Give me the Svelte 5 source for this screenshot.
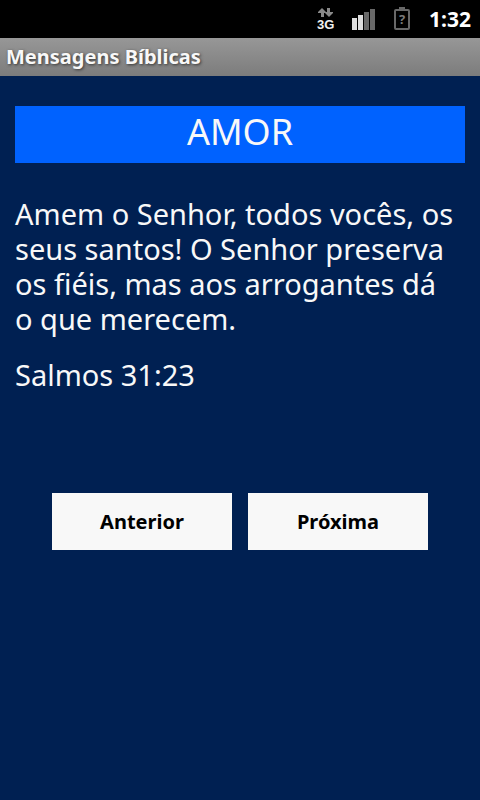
<script lang="ts">
	const verses = [
		{
			theme: 'AMOR',
			text: 'Amem o Senhor, todos vocês, os seus santos! O Senhor preserva os fiéis, mas aos arrogantes dá o que merecem.',
			reference: 'Salmos 31:23'
		}
	];

	let index = $state(0);
	const verse = $derived(verses[index]);

	const move = (step: number) => {
		index = (index + step + verses.length) % verses.length;
	};
</script>

<div class="screen">
	<div class="status-bar">
		<svg class="network" width="16" height="24" viewBox="0 0 16 24" role="img" aria-label="3G">
			<path d="M4 1 8 5V6H6V10H3V6H0V5Z" fill="#8a8a8a" />
			<path d="M9 1H12V5H15V6L11 10 7 6V5H9Z" fill="#8a8a8a" />
			<text x="-1" y="22">3G</text>
		</svg>
		<svg width="24" height="24" viewBox="0 0 24 24" aria-hidden="true">
			<path d="M0 11H5V23H0Z M6 8H11V23H6Z" fill="#dedede" />
			<path d="M12 5H17V23H12Z M18 2H23V23H18Z" fill="#686868" />
		</svg>
		<svg class="battery" width="17" height="24" viewBox="0 0 17 24" role="img" aria-label="Bateria">
			<path d="M5 0H11V2H5Z" fill="#686868" />
			<rect x="1" y="3" width="14" height="19" rx="1" fill="none" stroke="#686868" stroke-width="2" />
			<text x="8" y="17" text-anchor="middle">?</text>
		</svg>
		<time>1:32</time>
	</div>

	<header>
		<h1>Mensagens Bíblicas</h1>
	</header>

	<main>
		<h2>{verse.theme}</h2>
		<article>
			<p>{verse.text}</p>
			<p>{verse.reference}</p>
		</article>
		<div class="actions">
			<button type="button" onclick={() => move(-1)}>Anterior</button>
			<button type="button" onclick={() => move(1)}>Próxima</button>
		</div>
	</main>
</div>

<style>
	:global(body) {
		margin: 0;
		background: #002052;
	}

	.screen {
		min-height: 100vh;
		background: #002052;
		color: #f8f8f8;
		font-family: 'Noto Sans', 'Open Sans', sans-serif;
	}

	.status-bar {
		display: flex;
		align-items: center;
		justify-content: flex-end;
		gap: 18px;
		height: 38px;
		padding-right: 9px;
		background: #000000;
	}

	.network {
		overflow: visible;
	}

	.network text {
		fill: #f0f0f0;
		font-family: 'Liberation Sans Narrow', 'Liberation Sans', sans-serif;
		font-size: 13px;
		font-weight: 700;
	}

	.battery text {
		fill: #7a7a7a;
		font-size: 13px;
		font-weight: 700;
	}

	time {
		color: #ffffff;
		font-size: 21px;
		font-weight: 700;
	}

	header {
		display: flex;
		align-items: center;
		height: 38px;
		padding: 0 6px;
		background: linear-gradient(#979797, #7c7c7c);
	}

	h1,
	h2,
	p {
		margin: 0;
	}

	h1 {
		font-size: 20px;
		line-height: 28px;
		text-shadow: 1px 1px 3px #333333;
	}

	main {
		padding: 30px 15px;
	}

	h2 {
		background: #0062ff;
		padding-bottom: 5px;
		font-size: 36px;
		font-weight: 400;
		line-height: 52px;
		text-align: center;
	}

	article {
		display: grid;
		gap: 21px;
		padding: 33px 7px 101px 0;
		font-size: 29px;
		line-height: 35px;
	}

	.actions {
		display: flex;
		justify-content: center;
		gap: 16px;
	}

	button {
		width: 180px;
		height: 57px;
		border: 0;
		background: #f8f8f8;
		color: #000000;
		padding: 0;
		font: inherit;
		font-size: 20px;
		font-weight: 700;
		cursor: pointer;
	}
</style>
